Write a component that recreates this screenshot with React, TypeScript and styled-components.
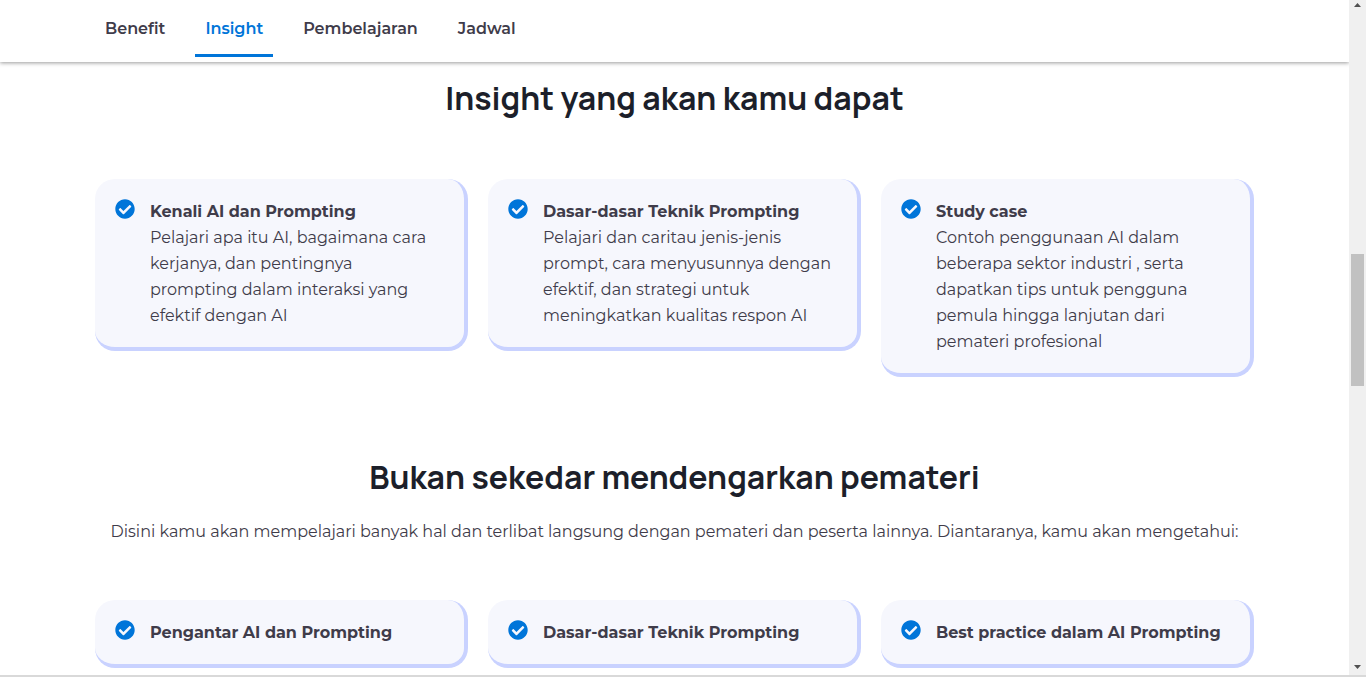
import React from 'react';
import styled, { createGlobalStyle } from 'styled-components';
import { FaCheckCircle } from 'react-icons/fa';

const GlobalStyle = createGlobalStyle`
  *, *::before, *::after { box-sizing: border-box; }
  body {
    margin: 0;
    background: #ffffff;
    color: #3f3c4a;
    font-family: Montserrat, Inter, "Liberation Sans", sans-serif;
    font-size: 16px;
    line-height: 26px;
  }
`;

const Frame = styled.div`
  display: grid;
  grid-template-columns: minmax(0, 1fr) 17px;
  height: 100vh;
  overflow: hidden;
  border-bottom: 2px solid #d9d9d9;
`;

const Page = styled.div`
  min-width: 0;
  overflow: hidden;
`;

const Header = styled.header`
  height: 62px;
  background: #ffffff;
  box-shadow: 0 1px 4px rgba(0, 0, 0, 0.4);
`;

const Container = styled.div`
  max-width: 1159px;
  margin: 0 auto;
`;

const Nav = styled.nav`
  display: flex;
  gap: 20px;
`;

const NavLink = styled.a<{ $active?: boolean }>`
  height: 57px;
  padding: 16px 10px 0;
  border-bottom: 3px solid ${(p) => (p.$active ? '#0075d9' : 'transparent')};
  color: ${(p) => (p.$active ? '#0075d9' : '#3f3c4a')};
  font-weight: 600;
  text-decoration: none;
`;

const Section = styled.section`
  padding-top: 16px;

  & + & {
    padding-top: 80px;
  }
`;

const Heading = styled.h2`
  margin: 0;
  color: #1c1f2a;
  font-family: Manrope, Inter, "Liberation Sans", sans-serif;
  font-size: 32px;
  font-weight: 700;
  line-height: 40px;
  text-align: center;
`;

const Lead = styled.p`
  margin: 22px 0 0;
  font-weight: 400;
  text-align: center;
`;

const Cards = styled.div<{ $gap: number }>`
  display: grid;
  grid-template-columns: repeat(3, minmax(0, 1fr));
  align-items: start;
  gap: 20px;
  margin-top: ${(p) => p.$gap}px;
`;

const Card = styled.article`
  display: flex;
  gap: 15px;
  padding: 20px 20px 18px;
  border: 0 solid #c9d2ff;
  border-width: 0 4px 4px 0;
  border-radius: 20px;
  background: #f6f7fd;
`;

const Check = styled(FaCheckCircle)`
  flex: none;
  width: 20px;
  height: 20px;
  color: #0075d9;
`;

const CardTitle = styled.h3`
  margin: 0;
  font-size: 16px;
  font-weight: 700;
`;

const CardText = styled.p`
  margin: 0;
  font-weight: 400;
`;

const ScrollTrack = styled.div`
  display: flex;
  flex-direction: column;
  align-items: center;
  justify-content: space-between;
  padding: 3px 0 6px;
  background: #f0f0f0;
`;

const ScrollThumb = styled.div`
  width: 13px;
  height: 132px;
  margin-bottom: 32px;
  background: #c1c1c1;
`;

const Arrow = styled.svg`
  width: 7px;
  height: 4px;
  fill: #505050;
`;

const insights = [
  { title: 'Kenali AI dan Prompting', text: 'Pelajari apa itu AI, bagaimana cara kerjanya, dan pentingnya prompting dalam interaksi yang efektif dengan AI' },
  { title: 'Dasar-dasar Teknik Prompting', text: 'Pelajari dan caritau jenis-jenis prompt, cara menyusunnya dengan efektif, dan strategi untuk meningkatkan kualitas respon AI' },
  { title: 'Study case', text: 'Contoh penggunaan AI dalam beberapa sektor industri , serta dapatkan tips untuk pengguna pemula hingga lanjutan dari pemateri profesional' },
];

const lessons = [
  { title: 'Pengantar AI dan Prompting' },
  { title: 'Dasar-dasar Teknik Prompting' },
  { title: 'Best practice dalam AI Prompting' },
];

function CardList({ items, gap }: { items: { title: string; text?: string }[]; gap: number }) {
  return (
    <Cards $gap={gap}>
      {items.map((item) => (
        <Card key={item.title}>
          <Check aria-hidden="true" />
          <div>
            <CardTitle>{item.title}</CardTitle>
            {item.text && <CardText>{item.text}</CardText>}
          </div>
        </Card>
      ))}
    </Cards>
  );
}

export default function App() {
  return (
    <>
      <GlobalStyle />
      <Frame>
        <Page>
          <Header>
            <Container>
              <Nav>
                <NavLink href="#benefit">Benefit</NavLink>
                <NavLink href="#insight" $active>Insight</NavLink>
                <NavLink href="#pembelajaran">Pembelajaran</NavLink>
                <NavLink href="#jadwal">Jadwal</NavLink>
              </Nav>
            </Container>
          </Header>
          <main>
            <Container>
              <Section id="insight">
                <Heading>Insight yang akan kamu dapat</Heading>
                <CardList items={insights} gap={61} />
              </Section>
              <Section id="pembelajaran">
                <Heading>Bukan sekedar mendengarkan pemateri</Heading>
                <Lead>
                  Disini kamu akan mempelajari banyak hal dan terlibat langsung dengan pemateri dan peserta lainnya. Diantaranya, kamu akan mengetahui:
                </Lead>
                <CardList items={lessons} gap={55} />
              </Section>
            </Container>
          </main>
        </Page>
        <ScrollTrack aria-hidden="true">
          <Arrow viewBox="0 0 7 4"><path d="M0 4 3.5 0 7 4z" /></Arrow>
          <ScrollThumb />
          <Arrow viewBox="0 0 7 4"><path d="M0 0h7L3.5 4z" /></Arrow>
        </ScrollTrack>
      </Frame>
    </>
  );
}
